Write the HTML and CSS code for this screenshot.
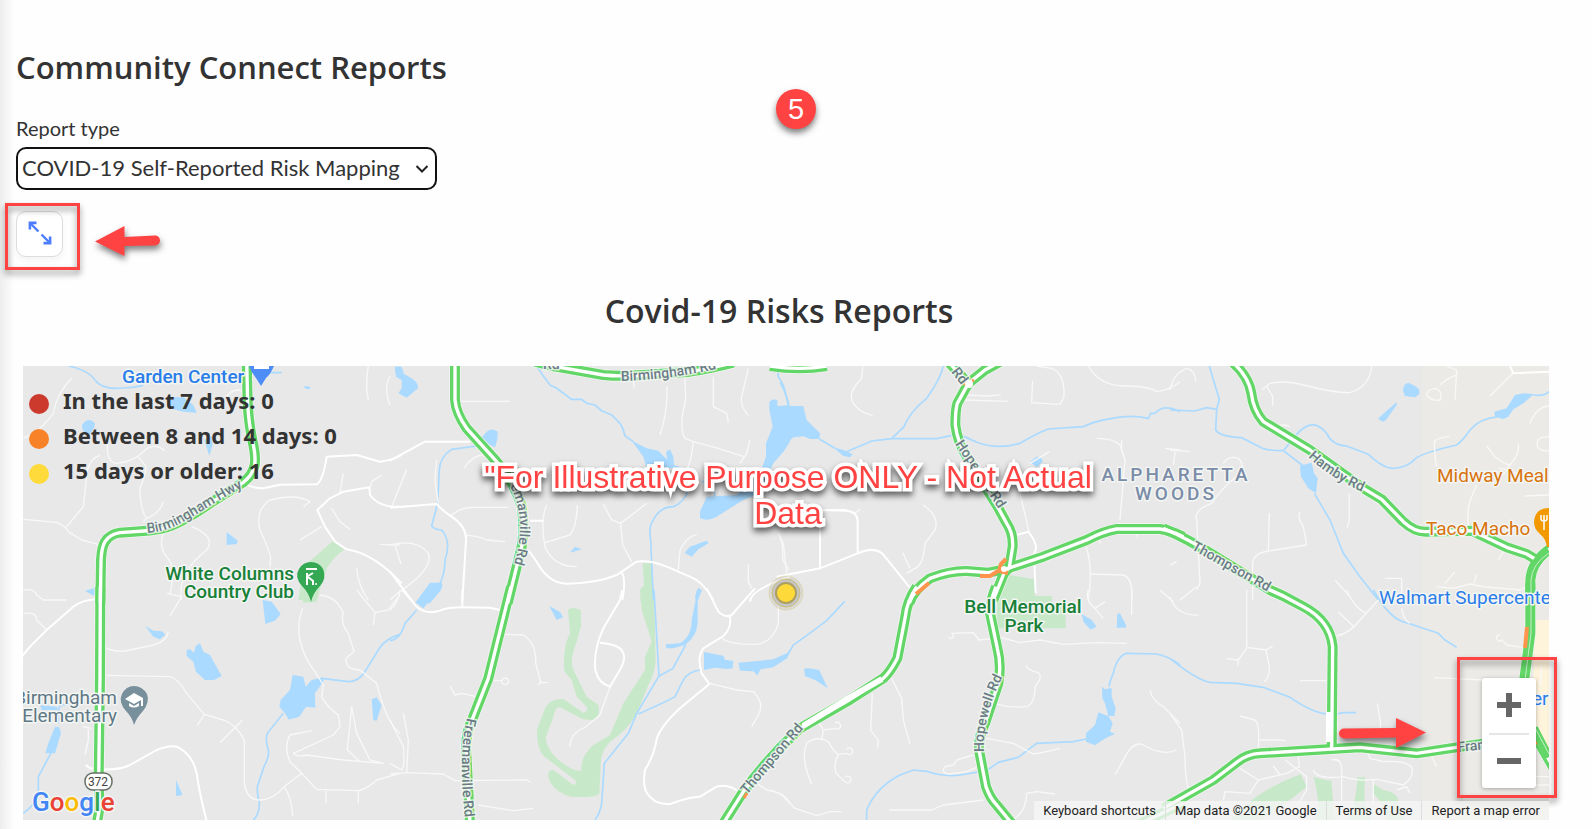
FILE: index.html
```html
<!DOCTYPE html>
<html lang="en">
<head>
<meta charset="utf-8">
<meta name="viewport" content="width=device-width, initial-scale=1">
<title>Community Connect Reports</title>
<link rel="stylesheet" href="styles.css">
</head>
<body>
<main class="page">
  <h1 class="page-title">Community Connect Reports</h1>
  <span class="step-badge">5</span>

  <div class="field">
    <label class="field-label" for="report-type">Report type</label>
    <div class="select-wrap">
      <select class="select" id="report-type">
        <option>COVID-19 Self-Reported Risk Mapping</option>
      </select>
      <svg class="select-chevron" viewBox="0 0 14 10" aria-hidden="true"><path d="M1.500 2L7 7.500L12.500 2" fill="none" stroke="#222" stroke-width="2"/></svg>
    </div>
  </div>

  <div class="toolbar">
    <button class="expand-btn" type="button" aria-label="Expand map">
      <svg viewBox="0 0 24 24" aria-hidden="true">
        <path d="M10.500 10.500L2.500 2.500M13.500 13.500L21.500 21.500" fill="none" stroke="#4c7cff" stroke-width="2.400"/>
        <path d="M1.900 8.500V1.900H8.500M22.100 15.500V22.100H15.500" fill="none" stroke="#4c7cff" stroke-width="2.600"/>
      </svg>
    </button>
    <span class="callout callout-expand"></span>
    <svg class="arrow arrow-left" viewBox="0 0 66 30" aria-hidden="true"><path d="M0 15.500L29.500 0V11L60 9.500A5 5 0 0 1 60 19.500L29.500 20V30Z" fill="#ff4343"/></svg>
  </div>

  <h2 class="section-title">Covid-19 Risks Reports</h2>

  <section class="map" aria-label="Risk map">
    <svg class="map-canvas" viewBox="23 366 1526 454" preserveAspectRatio="xMidYMid slice">
      <defs>
        <g id="major-roads">
          <g transform="translate(10 360) scale(.33333)">
            <path d="M710 0L713 130Q716 190 728 245Q738 290 734 315Q728 345 700 367L600 430Q520 486 470 502Q440 511 400 513L330 518Q300 522 285 545Q275 562 273 600L271 730"/>
          </g>
          <g transform="translate(10 590) scale(.33333)">
            <path d="M271 -10L270 260L266 570L268 640Q268 670 260 700"/>
          </g>
          <g transform="translate(390 360) scale(.33333)">
            <path d="M195 0V120Q198 160 230 205L320 305Q375 370 395 440Q405 510 395 560L380 620L353 730"/>
            <path d="M420 0Q470 16 510 22L640 45Q690 50 760 45L900 35Q960 26 1030 8"/>
          </g>
          <g transform="translate(390 590) scale(.33333)">
            <path d="M363 -10L295 265L248 385Q225 430 229 490L240 700"/>
            <path d="M1210 435Q1130 510 1060 605L1000 700"/>
          </g>
          <g transform="translate(780 360) scale(.33333)">
            <path d="M-30 18Q60 32 140 18"/>
            <path d="M500 0L565 70L532 130Q526 150 526 195Q532 245 560 290L650 435L680 490Q700 520 698 560L688 622L672 640L640 720"/>
            <path d="M565 70L615 30L670 0"/>
            <path d="M388 730Q400 690 450 655Q510 632 560 633L625 638L675 628L790 590L920 540Q970 514 1010 507H1140Q1170 511 1210 530"/>
          </g>
          <g transform="translate(780 590) scale(.33333)">
            <path d="M410 -10Q380 35 376 80L352 205Q330 248 310 265L200 335L60 415L-10 485"/>
            <path d="M648 -10Q628 40 630 70L652 175Q665 225 655 280L615 400Q595 440 597 480L618 590Q630 625 650 645L695 700"/>
            <path d="M1040 720L1210 640"/>
          </g>
          <g transform="translate(1170 360) scale(.33333)">
            <path d="M180 0Q235 45 244 100Q250 150 280 185L420 270L580 385L635 418L700 485Q735 517 770 515L905 512L1010 562L1070 582L1100 600"/>
            <path d="M-20 505Q60 540 130 585L300 690L340 708"/>
            <path d="M1150 560Q1085 600 1081 660V730"/>
          </g>
          <g transform="translate(1170 590) scale(.33333)">
            <path d="M300 0L340 18L400 50Q480 92 488 170L485 480"/>
            <path d="M-20 655L130 570L200 517Q230 492 270 490L570 472L740 490L860 472L960 458"/>
            <path d="M1081 -20V130L1060 290M1080 410L1160 550"/>
          </g>
        </g>
        <path id="birmingham-hwy" d="M147 533C181 531 196 510 250 484"/>
        <path id="birmingham-rd" d="M621 381Q670 380 730 366"/>
        <path id="freeman-north" d="M487 456Q534 500 514 564"/>
        <path id="freeman-south" d="M467 718Q457 760 466 826"/>
        <path id="thompson-south" d="M747 795L808 723"/>
        <path id="thompson-north" d="M1191 549L1275 596"/>
        <path id="hopewell-north" d="M955 444L1006 520"/>
        <path id="hopewell-south" d="M984 752Q982 715 1006 670"/>
        <path id="hamby" d="M1308 457Q1332 480 1370 495"/>
      </defs>

      <rect class="land" x="23" y="366" width="1526" height="454"/>
      <rect class="urban" x="1422" y="366" width="127" height="454"/>
      <path class="commercial" d="M1535 620H1549V755L1532 720Z"/>

      <!-- Parks and golf courses -->
      <g class="park">
        <path transform="translate(10 360) scale(.33333)" d="M970 542L1002 570Q975 585 950 625L920 720H865L880 620Z"/>
        <path transform="translate(10 590) scale(.33333)" d="M870 0H925L920 35L880 38Z"/>
        <path transform="translate(390 360) scale(.33333)" d="M758 610H786L792 725H752L750 690L762 675Z"/>
        <path transform="translate(390 590) scale(.33333)" d="M752 -5H792L797 210Q795 250 775 285L740 370Q710 425 660 455Q630 485 632 530L628 612Q615 622 580 621H545Q500 610 480 575Q465 540 490 540L550 585Q565 580 555 570L470 505Q440 485 441 420L465 355Q480 325 520 327L580 368Q595 365 590 350L560 320L545 270L524 245Q517 215 529 155L540 130L534 60Q545 48 572 60L574 105L560 155Q540 205 548 235L575 290L590 320L625 345Q632 380 610 390Q580 392 560 378L510 352Q495 352 492 375L468 440Q465 470 500 505Q545 545 575 542Q570 500 610 465L660 435L700 340L765 240V200L785 155L755 60Z"/>
        <path transform="translate(780 360) scale(.33333)" d="M662 640L764 658V708H815V730H635Z"/>
        <path transform="translate(780 590) scale(.33333)" d="M650 0H764V18H815V38H857V115H650Z"/>
        <path transform="translate(1170 590) scale(.33333)" d="M392 553L410 590Q350 640 270 690H180Q260 600 392 553ZM430 560Q480 575 484 570L490 640Q485 690 510 700H435Q455 640 430 560ZM562 562H586L583 600Q580 640 608 700H530Q560 640 562 562ZM612 583L640 600Q690 610 685 640L705 700H650Q650 650 610 610Z"/>
      </g>

      <!-- Lakes -->
      <g class="lake">
        <path transform="translate(10 360) scale(.33333)" d="M480 112L520 112L550 135L560 158L520 155L480 145ZM216 195Q235 168 255 190Q252 215 235 225Q215 215 216 195ZM583 240L605 228L608 255L598 288ZM650 516L683 542L680 552L650 555ZM882 78L900 80V88L886 86ZM225 692L262 682L252 708ZM1157 20H1170V50Q1150 45 1157 20Z"/>
        <path transform="translate(10 590) scale(.33333)" d="M758 30L785 35L812 72L795 92L766 102ZM406 108L430 122L456 124L466 134L450 148L430 140ZM530 180L540 178L552 188L557 168L570 160L580 185L600 195L635 258L612 270L585 270L558 245L550 215L530 198ZM848 255L880 260L887 290L905 270L940 262V275L915 310L916 353L888 350L868 380L836 389L825 370L808 350L812 330L840 300ZM1085 328L1100 322L1115 345L1100 392L1090 390ZM90 345L140 350L145 360H95ZM135 410L148 412L153 430L135 490H106L115 460ZM498 570L518 615L498 618Z"/>
        <path transform="translate(390 360) scale(.33333)" d="M15 20H35L42 42L60 52Q85 65 84 85L50 113L25 100L35 85V60L18 50ZM273 235L290 215Q305 202 323 215L322 238L315 262L290 250ZM725 242L770 265L805 272L832 300L828 275L840 268L850 290L852 315L880 325H770L760 290ZM1150 118L1162 120V138L1200 135V245L1180 275L1150 310L1110 400L1060 420L980 470Q955 485 930 475V455L950 410L1040 405L1110 340L1128 290V250L1148 200L1138 150V125ZM540 578L555 560L575 568ZM884 578L900 560L950 542L955 550L925 568L905 590ZM120 668L156 668Q160 685 145 700L120 730H75ZM925 683L936 690L920 730L915 710Z"/>
        <path transform="translate(390 590) scale(.33333)" d="M105 0H145L100 55L78 38ZM478 48L510 66L519 82L500 90ZM920 0H935L923 30V100Q920 140 885 165L850 175L828 175V163L870 160Q905 140 905 90L917 30ZM942 186L1000 197L1005 209L1030 213L1028 235L1010 237L975 233L942 240ZM1045 218L1110 212L1150 208L1190 190V205L1150 232L1112 238L1102 256L1090 244L1050 242Z"/>
        <path transform="translate(780 360) scale(.33333)" d="M-10 138L70 138L80 180L120 220L118 237L90 237L70 229L40 232L15 255L0 280H-30ZM160 262L190 270L218 283L210 292L190 288ZM750 305L770 290Q788 290 788 305L770 322Z"/>
        <path transform="translate(780 590) scale(.33333)" d="M72 238Q75 230 118 240L143 295L105 270L75 258ZM905 72L935 90L950 110L932 119L910 95ZM1012 72L1020 70L1038 105V113H1010ZM966 290L975 298L995 294V320L1007 355L1003 378H985L998 400L990 425L1005 432L985 440L960 455L945 466L918 455V430L945 405L955 367L985 378L975 340L967 325Z"/>
        <path transform="translate(1170 360) scale(.33333)" d="M705 73L715 68Q740 78 748 90V103L735 112L705 108L698 90ZM624 176L650 152L680 127V135L648 180L638 185ZM973 155L1010 145L1035 105L1060 100L1092 102L1060 130L1030 148L1015 170L998 178L975 168ZM390 317L425 308L432 340L443 355L438 400L415 385L393 350Z"/>
      </g>

      <!-- Streams -->
      <g class="stream">
        <path transform="translate(10 360) scale(.33333)" d="M175 18Q235 30 255 60Q275 90 340 84Q370 84 400 76M700 38H815"/>
        <path transform="translate(10 590) scale(.33333)" d="M1170 133Q1130 145 1110 172L1065 245Q1045 275 1015 275L935 265M820 370L772 430Q765 450 775 480Q778 500 762 530L742 590Q742 620 748 635Q750 670 730 690M125 485L85 560V610Q80 640 40 670M145 400L148 350Q160 340 182 345"/>
        <path transform="translate(390 360) scale(.33333)" d="M440 18Q460 50 480 75L500 85L545 118H575L590 130L615 135L635 152L665 165L690 190Q700 205 705 228L730 245M260 258L185 268Q150 290 148 330L143 430L125 498Q130 508 155 510Q185 545 165 600Q165 640 150 670M890 325L895 390Q880 430 850 440Q810 440 790 480Q775 500 782 540L790 720M935 365H965L975 410M1162 18L1165 50L1180 75L1195 135"/>
        <path transform="translate(390 590) scale(.33333)" d="M80 60L45 100Q30 150 0 152M792 0L807 258L740 370L715 430L643 520L635 640Q630 670 615 690M887 165L848 236L807 258M930 240Q895 245 880 270L855 320Q840 330 745 372M1200 180Q1190 200 1170 212"/>
        <path transform="translate(780 360) scale(.33333)" d="M490 18Q480 60 440 115Q390 155 372 200L335 236L275 243L200 275M118 237L165 265M0 68Q20 100 27 138M335 236H470L530 223Q560 230 590 247Q650 270 720 250Q770 220 805 207L910 200Q940 185 980 178Q1050 162 1105 175L1112 160H1125Q1150 130 1200 155"/>
        <path transform="translate(780 590) scale(.33333)" d="M194 34L140 92L100 122L40 165Q25 190 20 202L0 215M260 690V660Q290 590 360 555L400 540L440 544Q500 565 560 552L620 542L655 517L715 502L770 460L880 455L918 447M987 290Q990 270 1000 250Q1010 200 1040 190L1130 192Q1170 200 1200 225"/>
        <path transform="translate(1170 360) scale(.33333)" d="M118 18Q130 60 148 118L140 148L110 143L75 153L0 150M140 148L137 210Q150 230 215 233L280 266Q300 272 340 272L400 318M340 272L385 218Q430 170 470 220Q485 255 530 258L595 283Q640 325 670 325Q710 325 740 293Q770 275 860 255Q880 240 900 210Q930 175 985 170M1090 105Q1120 110 1137 95M433 400L480 480L520 580L570 650L625 720"/>
        <path transform="translate(1170 590) scale(.33333)" d="M0 205Q80 270 120 277L200 280L280 292L360 322Q430 370 475 372M500 372L520 368H558M610 0Q660 90 710 98L750 112L805 130L825 150L860 172"/>
      </g>

      <!-- Local streets -->
      <g class="street">
        <path transform="translate(10 360) scale(.33333)" d="M185 55Q140 100 130 160Q100 200 70 220L40 235M40 478L140 487Q170 500 175 515L215 540L265 553M168 502L220 440L232 330Q245 290 270 287M292 250Q290 310 320 310Q370 305 400 275Q430 245 465 272M385 290L408 320Q405 350 390 385Q390 450 410 475Q450 460 460 425M410 475L400 485M460 520Q445 560 470 590Q500 620 480 700M545 500Q620 530 590 570Q500 640 515 720M780 620L782 590Q770 550 750 510Q735 450 780 420Q860 400 900 425L880 440M870 540L935 500M965 445L990 485L1020 508M1000 340L990 400M1115 345L1085 365L1080 385M1110 553L1170 555M1040 625Q1045 680 1075 720M1075 18Q1065 80 1075 120M1140 50Q1120 80 1140 135M40 690Q75 685 80 705L100 720H170M650 110Q670 80 705 95"/>
        <path transform="translate(10 590) scale(.33333)" d="M40 70Q80 65 80 90L110 120M285 172Q320 190 360 180L430 165Q470 155 475 125M470 10L515 20L480 78M290 256L480 260Q505 265 530 310L583 373L562 406M583 373L640 390Q680 405 703 450V580Q710 630 750 630Q790 630 822 590L875 550L840 515Q820 470 840 435L905 422M697 391L630 458M822 590Q845 620 848 678M875 550L920 598L1045 602Q1075 595 1100 570L1170 550M948 600V640M1045 602V640M878 55Q860 100 870 150Q880 200 915 245L940 285L935 320Q950 350 985 375L990 410L970 435L850 490Q860 502 890 495L1000 510L1120 520L1080 510L1040 430L1025 350L1012 480L1050 515M930 15Q980 20 1000 70Q990 100 1015 130L1032 185L1008 205Q1005 240 1050 240L1100 280Q1130 400 1170 430M1040 0L1095 68L1135 60L1170 15M1090 105L1095 68M235 410V450L225 495M218 410L245 415"/>
        <path transform="translate(390 360) scale(.33333)" d="M210 124H360M50 330L25 390L5 440M140 300L135 360L145 430M180 470Q210 440 260 442H355M223 324Q250 280 300 283M0 555Q80 535 115 580Q130 620 50 680Q20 700 0 720M15 555L33 612M228 526Q270 528 290 540L345 545M470 435Q450 480 465 560Q490 620 560 620M562 435Q560 500 540 525L465 548M640 433L665 480L692 490L770 430M692 490L698 555L725 605M830 80Q835 150 810 225M732 60V85M885 55L887 120Q865 200 885 235L910 245L985 265L1062 290M970 50V140L1010 160L1015 188M1075 25L1055 110Q1050 140 1075 165M910 245Q905 300 890 330M1080 240L1070 280L1050 310M865 630L870 570Q890 530 920 523M1075 612V665L1085 685M1165 520L1180 550L1190 640"/>
        <path transform="translate(390 590) scale(.33333)" d="M345 133L400 135Q440 160 437 220L452 275L445 285M452 278H475M312 272H333M345 264A10 10 0 1 0 346 264M180 288L195 315L215 310L258 320M40 370L55 450L50 548M0 390L40 470Q45 530 35 540L0 520M0 552L50 548L160 552L195 572L410 570L422 577M265 645L370 662L430 655M540 470Q540 430 585 412L630 375L660 290M0 60Q25 40 30 0M960 280L1040 300L1090 305Q1125 340 1105 375L1085 410M1165 50V100Q1150 155 1100 163Q1020 165 995 145M1100 580L1130 600Q1180 605 1200 640"/>
        <path transform="translate(780 360) scale(.33333)" d="M248 20L245 55Q200 100 220 130Q235 155 278 167M555 105L625 108L662 104M555 120L685 124M758 62L755 128L840 133L852 110Q855 40 815 25L770 18M925 18Q960 80 1040 78Q1110 80 1130 95Q1170 90 1200 65M950 235Q1000 235 1020 255L1035 300L1020 480M1025 240V265M1155 265L1200 270M750 310L808 275M720 400L747 515M430 435Q480 470 465 510L435 550Q430 610 410 622L380 640M368 578L390 625M0 530Q10 560 8 600L27 630M918 560Q940 620 925 720M930 642L1030 645Q1060 655 1055 720M1070 500V530M955 530L960 550M240 448L225 460"/>
        <path transform="translate(780 590) scale(.33333)" d="M505 140A8 8 0 1 0 515 130L580 128L597 150L665 143L720 158L780 150L850 163L950 158L1040 160M738 225Q740 240 775 248Q790 260 765 290Q765 340 740 350Q690 355 640 340M335 265L365 325L370 390L390 463M277 310L272 420Q285 440 295 450L292 475M118 400L130 420L126 445M130 420L165 415A10 10 0 1 0 165 400M95 583Q60 500 80 460Q110 435 145 455Q160 485 175 493L200 490A10 10 0 1 0 200 478M175 493Q160 520 168 550L195 575A10 10 0 1 0 195 562M620 445L700 460L760 492L800 485L840 475M580 495L530 510L520 525L495 530Q480 550 510 552L560 545L595 530M0 610L45 655L110 677L150 665H185M328 660H455L490 645L610 630M1110 300Q1115 330 1150 350L1200 400M1005 555L1030 510Q1060 450 1090 465Q1150 500 1190 480M925 0Q915 30 940 50L970 85M945 55L975 35M1055 0V75M1140 0L1180 35M705 685Q740 660 740 610L770 605L825 612"/>
        <path transform="translate(1170 360) scale(.33333)" d="M0 90Q10 40 50 25Q75 30 78 65M275 90L300 70Q350 60 400 75Q500 100 540 98Q600 80 605 18M290 78L308 110V138M315 200Q340 190 360 200M830 18L860 30L855 120M860 45Q830 55 810 75M793 85Q770 90 770 105Q785 125 810 120Q820 90 793 85M1030 38L960 108M1137 138Q1100 140 1080 190M1137 230Q1100 230 1102 250Q1100 275 1137 272M838 230Q790 235 793 250Q795 300 800 320M950 258L975 290Q1000 310 1020 315Q1050 280 1045 250M1020 315L1000 345M985 325Q1050 330 1060 370M920 375L905 410Q890 440 895 500M1065 408L1137 405M390 455Q380 470 400 500L410 555L295 573Q250 580 248 610V720M298 460L295 573M538 400V480L532 503M0 270L60 275M15 275L10 315M160 310Q175 285 205 295Q225 315 210 340Q150 390 125 430Q70 450 80 480L90 670L80 690M0 615L20 605M80 680L30 720M495 660L540 710M645 655H695V720M800 680L850 685L900 672L940 680L1050 690L1070 680M1000 575L985 600M855 635L825 670M920 643L912 670"/>
        <path transform="translate(1170 590) scale(.33333)" d="M230 0V172L288 180L308 168M288 180L298 230Q300 260 283 275M230 175L205 210L170 206M205 212L203 226M390 272H470M210 378L255 390Q270 400 265 475M0 370L35 420L45 500Q45 580 60 610M500 138Q540 130 570 90L625 30M553 112L505 65M590 72Q550 50 530 0M622 340L632 400L628 430M270 450H325L348 452M210 535L265 570L350 550L388 530L385 500M310 528L330 555M345 510L410 560V600L380 650M430 540Q440 570 520 560Q560 575 620 568L700 585Q735 560 725 530Q700 510 640 515L600 505L590 480M485 510Q520 500 515 560L515 640M610 570V650M680 600L710 590L720 610M265 570L240 610L165 605L160 630M785 500L800 530M990 135A9 9 0 1 0 995 150L1010 165L1060 172M792 263L940 270M695 55Q700 90 720 100M1115 230L1110 290M1095 560H1137M1095 585H1137M0 20Q15 75 85 76"/>
      </g>

      <!-- Secondary roads -->
      <g class="secondary">
        <path transform="translate(10 360) scale(.33333)" d="M700 365Q720 385 760 385L810 374L920 373Q940 360 950 290L1040 285L1110 305Q1150 300 1175 285M1175 440Q1110 445 1080 405L1078 382L1000 395L960 415L922 450L945 500L975 545L1010 568Q1090 580 1175 670"/>
        <path transform="translate(10 590) scale(.33333)" d="M255 28Q220 30 190 50L110 120L60 170L35 200M227 525L240 535Q320 545 360 525L440 480Q490 460 510 475Q550 500 560 550Q570 620 592 700"/>
        <path transform="translate(390 360) scale(.33333)" d="M0 302L105 245H240M0 443L140 432Q155 450 185 470Q230 500 228 540L217 725M415 570L440 605Q475 670 530 671Q620 670 680 645L740 605Q780 600 830 620L900 650Q940 665 970 720M692 635Q710 650 697 720M0 635L68 725M1080 725Q1080 690 1200 650M420 482H460"/>
        <path transform="translate(390 590) scale(.33333)" d="M38 0L80 50Q110 75 150 62Q170 52 220 52L300 53L330 60M217 0V52M697 0L690 30L640 115Q610 180 616 240Q625 280 660 290L695 230Q710 200 695 180Q680 162 630 158M950 -5L985 65Q1005 85 1025 75L1095 -5M1020 80Q1025 115 1000 138L940 175Q920 200 935 250L958 282L870 355Q800 420 798 460Q790 500 765 540Q755 600 780 620Q800 645 840 642Q900 620 930 620L980 590Q1020 580 1050 610"/>
        <path transform="translate(780 360) scale(.33333)" d="M120 625V450L200 452Q235 455 233 490V580M-10 650L120 625L233 580Q290 555 315 590L395 690M685 532L745 515Q780 560 762 580L767 700M130 450H200"/>
        <path transform="translate(1170 360) scale(.33333)" d="M1020 18L1030 40L1137 35"/>
      </g>

      <!-- Traffic coloured roads -->
      <use href="#major-roads" class="road-halo"/>
      <use href="#major-roads" class="road-traffic"/>
      <use href="#major-roads" class="road-core"/>
      <path d="M882 679L847 699L803 726M1329 712V742" fill="none" stroke="#fff" stroke-width="6"/>
      <path d="M916 594L929 583M980 576H990L998 571M1006 559L1001 564L999 571L1008 573" fill="none" stroke="#ff954d" stroke-width="4"/>
      <path d="M964 385L967 381M972 381L974 380M744 798L747 793M1536 740L1538 744" fill="none" stroke="#ff954d" stroke-width="3"/>
      <circle cx="1004" cy="569" r="3" fill="#fff"/>
      <circle cx="969" cy="384" r="4" fill="#fff"/>
      <path d="M1549 551Q1531 562 1530 580V633L1524 680M1534 728L1549 757" fill="none" stroke="#63d668" stroke-width="8"/>
      <path d="M1549 553Q1532 564 1531 580V633L1525 680M1534 726L1549 754" fill="none" stroke="#c4efc5" stroke-width="1"/>
      <path d="M1527 627L1525 648" stroke="#ff954d" stroke-width="4"/>

      <!-- Road names -->
      <g class="road-name">
        <text><textPath href="#birmingham-hwy">Birmingham Hwy</textPath></text>
        <text><textPath href="#birmingham-rd">Birmingham Rd</textPath></text>
        <text x="543" y="369">Rd</text>
        <text text-anchor="end"><textPath href="#freeman-north" startOffset="100%">emanville Rd</textPath></text>
        <text><textPath href="#freeman-south">Freemanville Rd</textPath></text>
        <text><textPath href="#thompson-south">Thompson Rd</textPath></text>
        <text><textPath href="#thompson-north">Thompson Rd</textPath></text>
        <text><textPath href="#hopewell-north">Hopewell Rd</textPath></text>
        <text><textPath href="#hopewell-south">Hopewell Rd</textPath></text>
        <text><textPath href="#hamby">Hamby Rd</textPath></text>
        <text transform="translate(951 372) rotate(52)">Rd</text>
        <text transform="translate(1458 752) rotate(-6)">Fran</text>
      </g>

      <!-- Places -->
      <g class="place">
        <text class="shop strong" x="122" y="383">Garden Center</text>
        <text class="green" x="294" y="580" text-anchor="end">White Columns</text>
        <text class="green" x="294" y="598" text-anchor="end">Country Club</text>
        <text class="green" x="1023" y="613" text-anchor="middle">Bell Memorial</text>
        <text class="green" x="1024" y="632" text-anchor="middle">Park</text>
        <text class="school" x="117" y="704" text-anchor="end">Birmingham</text>
        <text class="school" x="117" y="722" text-anchor="end">Elementary</text>
        <text class="food" x="1437" y="482">Midway Meal</text>
        <text class="food" x="1426" y="535">Taco Macho</text>
        <text class="shop" x="1379" y="604">Walmart Supercente</text>
        <text class="shop" x="1532" y="705">er</text>
        <text class="district" x="1176" y="481" text-anchor="middle">ALPHARETTA</text>
        <text class="district" x="1176" y="500" text-anchor="middle">WOODS</text>
      </g>

      <path d="M249 366H274Q270 375 266 378L261 386L256 378Q251 372 249 366Z" fill="#4e8df5"/>
      <path d="M254 366H269V369H254Z" fill="#fff"/>
      <path d="M311 602Q309 593 302 586Q294 577 299 569Q303 562 311 562Q319 562 323 569Q327 578 320 586Q313 593 311 602Z" fill="#34a853"/>
      <path d="M306 569H317M307 573V585M308 576L313 573M308 577L313 581V585" fill="none" stroke="#fff" stroke-width="2"/>
      <circle cx="316" cy="584" r="1" fill="#fff"/>
      <path d="M134 725Q132 717 126 711Q118 702 122 694Q126 686 134 686Q142 686 147 694Q150 702 143 711Q137 717 134 725Z" fill="#78909c"/>
      <path d="M125 699L134 693L143 698V706H141V700L134 704ZM129 703L134 706L139 703V706Q134 709 129 706Z" fill="#fff"/>
      <path d="M1549 547H1547Q1546 539 1540 534Q1534 529 1534 522Q1535 508 1549 508Z" fill="#f29900"/>
      <path d="M1541 515V519Q1541 521 1544 521Q1547 521 1547 519V515M1544 515V530" fill="none" stroke="#fff" stroke-width="1.500"/>
      <rect x="85" y="773" width="27" height="17" rx="8" fill="#fff" stroke="#667066" stroke-width="1.500"/>
      <text class="shield" x="98" y="786" text-anchor="middle">372</text>
      <text class="google" x="32" y="811"><tspan fill="#4285f4">G</tspan><tspan fill="#ea4335">o</tspan><tspan fill="#fbbc05">o</tspan><tspan fill="#4285f4">g</tspan><tspan fill="#34a853">l</tspan><tspan fill="#ea4335">e</tspan></text>

      <circle cx="786" cy="593" r="17" fill="#777" fill-opacity=".12" stroke="#dac769" stroke-opacity=".4"/>
      <circle cx="786" cy="593" r="14" fill="#777" fill-opacity=".2" stroke="#cbb650" stroke-opacity=".7"/>
      <circle cx="786" cy="593" r="11" fill="#a28d37" fill-opacity=".7"/>
      <circle cx="786" cy="593" r="9" fill="#fdda3a"/>
    </svg>

    <ul class="legend">
      <li class="legend-item"><span class="dot dot-red"></span><span class="legend-text">In the last 7 days: 0</span></li>
      <li class="legend-item"><span class="dot dot-orange"></span><span class="legend-text">Between 8 and 14 days: 0</span></li>
      <li class="legend-item"><span class="dot dot-yellow"></span><span class="legend-text">15 days or older: 16</span></li>
    </ul>

    <p class="notice">"For Illustrative Purpose ONLY - Not Actual<br>Data</p>

    <svg class="arrow arrow-right" viewBox="0 0 87 30" aria-hidden="true"><path d="M87 14.500L57 0V10L5 10.500A5 5 0 0 0 5 20.500L57 19.500V30Z" fill="#ff4343"/></svg>

    <div class="zoom-control">
      <button class="zoom-btn" type="button" aria-label="Zoom in"><svg viewBox="0 0 26 26" aria-hidden="true"><path d="M1 13H25M13 1V25" stroke="#666" stroke-width="6"/></svg></button>
      <button class="zoom-btn" type="button" aria-label="Zoom out"><svg viewBox="0 0 26 26" aria-hidden="true"><path d="M1 13H25" stroke="#666" stroke-width="6"/></svg></button>
    </div>
    <span class="callout callout-zoom"></span>

    <div class="attribution">
      <button class="attribution-item" type="button">Keyboard shortcuts</button>
      <span class="attribution-item">Map data ©2021 Google</span>
      <a class="attribution-item" href="#terms">Terms of Use</a>
      <a class="attribution-item" href="#report">Report a map error</a>
    </div>
  </section>
</main>
</body>
</html>
```

FILE: styles.css
```css
* {
  box-sizing: border-box;
}

body {
  margin: 0;
  background: #fefefe linear-gradient(90deg, #ededed, #fefefe 14px) no-repeat;
  color: #333;
  font-family: Lato, sans-serif;
}

.page {
  position: relative;
  padding: 45px 43px 9px 16px;
}

.page-title,
.section-title {
  margin: 0;
  font-family: "Open Sans", sans-serif;
  font-weight: 600;
  font-size: 31px;
  line-height: 44px;
}

.step-badge {
  position: absolute;
  top: 89px;
  left: 776px;
  width: 40px;
  height: 40px;
  border-radius: 50%;
  background: #ff4343;
  color: #fff;
  font: 29px/41px "Liberation Sans", sans-serif;
  text-align: center;
  box-shadow: 0 4px 6px rgba(0, 0, 0, .5);
}

.field {
  width: 421px;
  max-width: 100%;
  margin-top: 25px;
}

.field-label {
  display: block;
  font-size: 20px;
  line-height: 28px;
}

.select-wrap {
  position: relative;
  margin-top: 5px;
}

.select {
  display: block;
  width: 100%;
  height: 43px;
  padding: 0 32px 2px 4px;
  border: 2px solid #111;
  border-radius: 10px;
  background: #fff;
  color: #333;
  font-family: Lato, sans-serif;
  font-size: 22px;
  text-rendering: optimizeLegibility;
  appearance: none;
}

.select-chevron {
  position: absolute;
  top: 17px;
  right: 8px;
  width: 14px;
  height: 10px;
  pointer-events: none;
}

.toolbar {
  position: relative;
  margin-top: 21px;
}

.expand-btn {
  display: flex;
  align-items: center;
  justify-content: center;
  width: 47px;
  height: 46px;
  padding: 0 0 2px;
  border: 1px solid #ddd;
  border-radius: 10px;
  background: #fff;
  box-shadow: 0 4px 6px rgba(0, 0, 0, .04);
}

.expand-btn svg {
  width: 24px;
  height: 24px;
}

.callout {
  position: absolute;
  border: 3px solid #ff4343;
  filter: drop-shadow(0 4px 3px rgba(0, 0, 0, .45));
  pointer-events: none;
}

.callout-expand {
  top: -8px;
  left: -11px;
  width: 75px;
  height: 67px;
}

.arrow {
  position: absolute;
  filter: drop-shadow(1px 4px 3px rgba(0, 0, 0, .5));
}

.arrow-left {
  top: 15px;
  left: 79px;
  width: 66px;
  height: 30px;
}

.section-title {
  margin: 32px 7px 33px 0;
  font-size: 32px;
  text-align: center;
}

.map {
  position: relative;
  margin-left: 7px;
  font-family: Roboto, sans-serif;
}

.map-canvas {
  display: block;
  width: 100%;
}

.land { fill: #e8e8e8; }
.urban { fill: #ebeae6; }
.commercial { fill: #fef4dc; }
.park { fill: #c8e9c9; }
.lake { fill: #aadaff; }

.stream {
  fill: none;
  stroke: #aadaff;
  stroke-width: 5;
}

.street,
.secondary {
  fill: none;
  stroke: #f8f8f8;
  stroke-width: 4;
  stroke-linejoin: round;
}

.secondary {
  stroke: #fff;
  stroke-width: 6;
}

.road-halo,
.road-traffic,
.road-core {
  fill: none;
  stroke-linejoin: round;
}

.road-halo {
  stroke: #f4f7f4;
  stroke-width: 34;
}

.road-traffic {
  stroke: #63d668;
  stroke-width: 30;
}

.road-core {
  stroke: #fff;
  stroke-width: 10;
}

.road-name,
.place,
.google {
  paint-order: stroke;
  stroke: #f3f6f3;
  stroke-width: 3;
  stroke-linejoin: round;
}

.road-name {
  fill: #6b7b86;
  font-size: 14px;
  font-weight: 500;
  stroke-opacity: .8;
}

.place {
  font-size: 19px;
}

.strong { font-weight: 500; }
.shop { fill: #2b7de9; }
.food { fill: #d9730d; }
.school { fill: #5f7885; }

.green {
  fill: #188038;
  font-weight: 500;
}

.district {
  fill: #7b8ca8;
  font-weight: 500;
  letter-spacing: 3px;
}

.shield {
  fill: #444;
  font-size: 12px;
}

.google {
  font-size: 26px;
  font-weight: 500;
}

.legend {
  position: absolute;
  top: 19px;
  left: 6px;
  margin: 0;
  padding: 0;
  list-style: none;
  color: #333;
  font-family: "Noto Sans", sans-serif;
  font-size: 22px;
  font-weight: 700;
  line-height: 32px;
}

.legend-item {
  display: flex;
  align-items: flex-end;
  gap: 14px;
  height: 35px;
}

.legend-text {
  padding-bottom: 4px;
}

.dot {
  width: 20px;
  height: 20px;
  margin-bottom: 6px;
  border-radius: 50%;
}

.dot-red { background: #cb3a2d; }
.dot-orange { background: #f88228; }
.dot-yellow { background: #fedb3b; }

.notice {
  position: absolute;
  top: 93px;
  left: 0;
  right: 0;
  margin: 0;
  padding-left: 4px;
  color: #ff4343;
  font: 32px/36px "Liberation Sans", sans-serif;
  text-align: center;
  white-space: nowrap;
  paint-order: stroke;
  -webkit-text-stroke: 7px #fff;
  stroke-linejoin: round;
  filter: drop-shadow(0 4px 3px rgba(0, 0, 0, .6));
  pointer-events: none;
}

.arrow-right {
  right: 123px;
  bottom: 72px;
  width: 87px;
  height: 30px;
}

.zoom-control {
  position: absolute;
  right: 13px;
  bottom: 32px;
  display: grid;
  width: 54px;
  border-radius: 3px;
  background: #fff;
  box-shadow: 0 1px 4px rgba(0, 0, 0, .3);
}

.zoom-btn {
  display: grid;
  place-items: center;
  height: 55px;
  margin: 0 7px;
  padding: 0 0 2px;
  border: 0;
  background: none;
}

.zoom-btn + .zoom-btn {
  border-top: 2px solid #e6e6e6;
}

.zoom-btn svg {
  width: 26px;
  height: 26px;
}

.callout-zoom {
  right: -8px;
  bottom: 22px;
  width: 100px;
  height: 141px;
}

.attribution {
  position: absolute;
  right: 0;
  bottom: 0;
  display: flex;
  background: rgba(245, 245, 245, .8);
}

.attribution-item {
  padding: 0 9px;
  border: 0;
  background: none;
  color: #222;
  font: 13px/19px Roboto, sans-serif;
  text-decoration: none;
}

.attribution-item + .attribution-item {
  border-left: 1px solid #ddd;
}
```
